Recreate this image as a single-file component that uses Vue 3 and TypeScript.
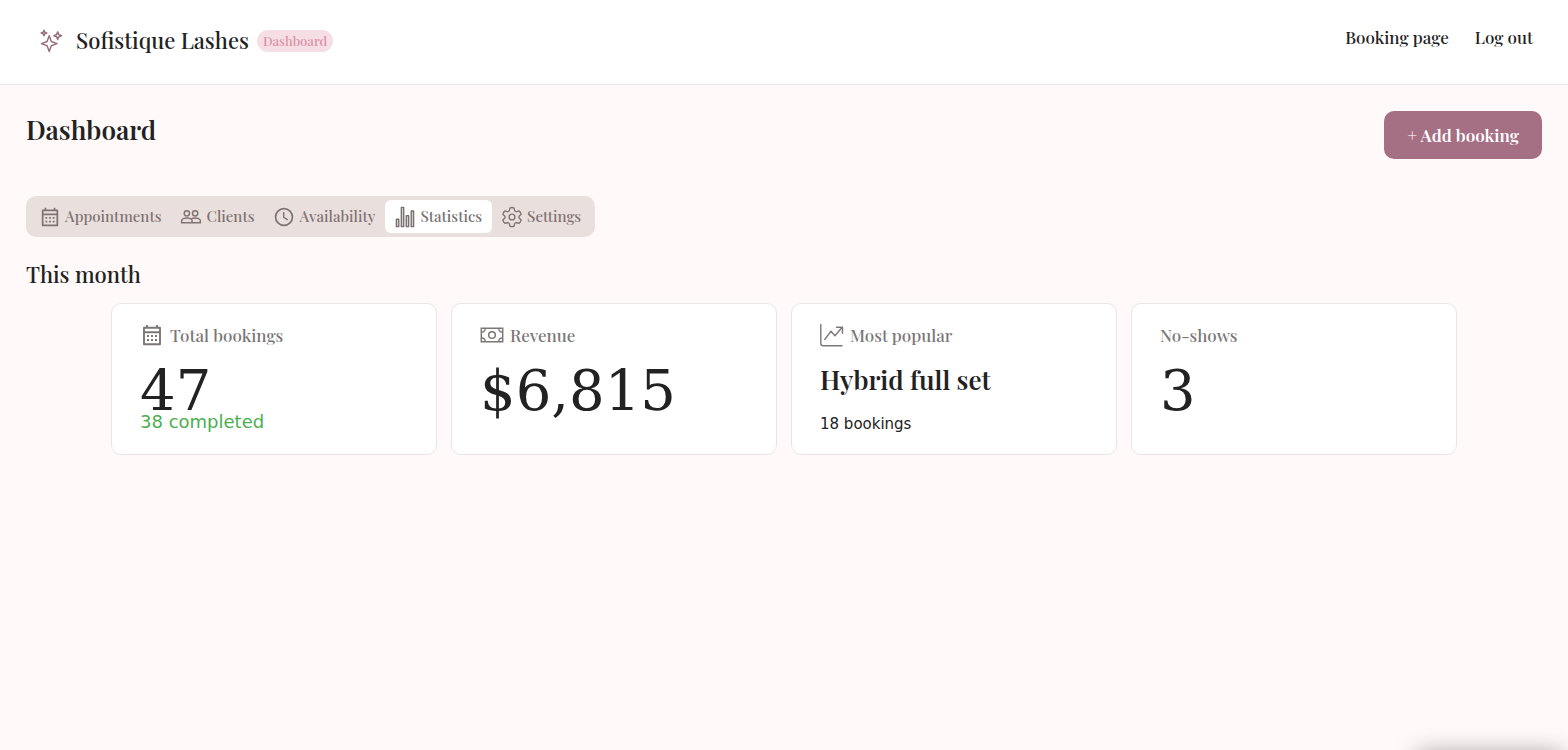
<script setup lang="ts">
import { ref } from 'vue'

type IconName = 'calendar' | 'clients' | 'clock' | 'bars' | 'gear' | 'money' | 'trend'

interface Tab {
  label: string
  icon: IconName
}

interface Stat {
  label: string
  icon?: IconName
  value?: string
  title?: string
  success?: string
  note?: string
}

const tabs: Tab[] = [
  { label: 'Appointments', icon: 'calendar' },
  { label: 'Clients', icon: 'clients' },
  { label: 'Availability', icon: 'clock' },
  { label: 'Statistics', icon: 'bars' },
  { label: 'Settings', icon: 'gear' },
]

const stats: Stat[] = [
  { label: 'Total bookings', icon: 'calendar', value: '47', success: '38 completed' },
  { label: 'Revenue', icon: 'money', value: '$6,815' },
  { label: 'Most popular', icon: 'trend', title: 'Hybrid full set', note: '18 bookings' },
  { label: 'No-shows', value: '3' },
]

const active = ref('Statistics')
</script>

<template>
  <svg class="defs" aria-hidden="true">
    <symbol id="calendar" viewBox="0 0 24 24">
      <path fill="none" stroke="currentColor" stroke-width="1.900" stroke-linejoin="round" d="M4 4.800h16v16.400H4zM4 9.200h16M7 2v2.800M17 2v2.800" />
      <path fill="currentColor" d="M7 12h2v2H7zm4 0h2v2h-2zm4 0h2v2h-2zM7 16h2v2H7zm4 0h2v2h-2zm4 0h2v2h-2z" />
    </symbol>
    <symbol id="clients" viewBox="0 0 24 24">
      <g fill="none" stroke="currentColor" stroke-width="1.600">
        <circle cx="7.500" cy="8" r="2.900" />
        <circle cx="16.500" cy="8" r="2.900" />
        <path d="M1.800 18.200v-2.100c0-1.900 3.300-3 5.700-3s5.700 1.100 5.700 3v2.100zM13.200 18.200h9v-2.100c0-1.900-3.300-3-5.700-3-1.500 0-3.200.4-4.400 1.100" />
      </g>
    </symbol>
    <symbol id="clock" viewBox="0 0 24 24">
      <g fill="none" stroke="currentColor" stroke-width="1.900">
        <circle cx="12" cy="12" r="9.200" />
        <path d="M11.700 6.500v5.900l4.500 2.700" stroke-width="1.500" />
      </g>
    </symbol>
    <symbol id="bars" viewBox="0 0 24 24">
      <path fill="#d8d4d4" stroke="currentColor" stroke-width="1.500" stroke-linejoin="round" d="M2.600 14.500h2.600v8H2.600zM8 1.500h2.600v21H8zM13.400 10.500H16v12h-2.600zM18.800 5.500h2.600v17h-2.600z" />
    </symbol>
    <symbol id="gear" viewBox="0 0 24 24">
      <g fill="none" stroke="currentColor" stroke-width="1.500" stroke-linejoin="round">
        <path d="M9.700 2.200Q12 1 14.300 2.200l.6 3 1.800 1.100 2.900-1Q21.700 6.900 21.900 9.300l-2.300 1.900v1.900l2.300 2Q21.700 17.400 19.600 19l-2.900-1-1.800 1.100-.6 2.900Q12 23 9.700 22l-.6-2.900L7.300 18l-2.900 1Q2.300 17.400 2.100 15.100l2.300-2v-1.900L2.100 9.300Q2.300 6.900 4.400 5.300l2.900 1 1.800-1.100z" />
        <circle cx="12" cy="12" r="3.200" />
      </g>
    </symbol>
    <symbol id="money" viewBox="0 0 24 24">
      <g fill="none" stroke="currentColor" stroke-width="1.500">
        <path d="M1.300 5.300h21.400v13.400H1.300zM5.300 5.300a4 4 0 0 1-4 4M18.700 5.300a4 4 0 0 0 4 4M5.300 18.700a4 4 0 0 0-4-4M18.700 18.700a4 4 0 0 1 4-4" />
        <circle cx="12" cy="12" r="3.300" />
      </g>
    </symbol>
    <symbol id="trend" viewBox="0 0 24 24">
      <g fill="none" stroke="currentColor" stroke-width="1.400" stroke-linecap="round" stroke-linejoin="round">
        <path d="M.8 1.500v18.700c0 1.800 1 2.600 2.800 2.600H22" />
        <path d="M4.800 16.500 11 8.200l4 4.500 7-8.200M16.500 4.200h6v6" />
      </g>
    </symbol>
  </svg>

  <div class="page">
    <header class="topbar">
      <div class="brand">
        <svg class="logo" viewBox="0 0 24 24" aria-hidden="true">
          <g fill="none" stroke="currentColor" stroke-width="1.500" stroke-linejoin="round">
            <path d="M10.200 6.800L12.300 12.500 18 14.600 12.300 16.700 10.200 22.400 8.100 16.700 2.400 14.600 8.100 12.500z" />
            <path d="M5 1.200L5.800 3.200 7.800 4 5.800 4.800 5 6.800 4.200 4.800 2.200 4 4.200 3.200z" />
            <path d="M18.700 2.900L19.800 5.600 22.500 6.700 19.800 7.800 18.700 10.500 17.600 7.800 14.900 6.700 17.600 5.600z" />
          </g>
        </svg>
        <span class="name">Sofistique Lashes</span>
        <span class="badge">Dashboard</span>
      </div>
      <nav class="links">
        <a href="#booking">Booking page</a>
        <a href="#logout">Log out</a>
      </nav>
    </header>

    <main>
      <div class="heading">
        <h1>Dashboard</h1>
        <button type="button" class="add"><span class="plus">+</span> Add booking</button>
      </div>

      <div class="tabs" role="tablist">
        <button
          v-for="tab in tabs"
          :key="tab.label"
          type="button"
          role="tab"
          class="tab"
          :class="{ active: active === tab.label }"
          :aria-selected="active === tab.label"
          @click="active = tab.label"
        >
          <svg class="tab-icon" aria-hidden="true"><use :href="'#' + tab.icon" /></svg>
          {{ tab.label }}
        </button>
      </div>

      <h2>This month</h2>
      <section class="cards">
        <article v-for="stat in stats" :key="stat.label" class="card">
          <h3>
            <svg v-if="stat.icon" class="card-icon" aria-hidden="true"><use :href="'#' + stat.icon" /></svg>
            {{ stat.label }}
          </h3>
          <p v-if="stat.value" class="value">{{ stat.value }}</p>
          <p v-if="stat.title" class="title">{{ stat.title }}</p>
          <p v-if="stat.success" class="success">{{ stat.success }}</p>
          <p v-if="stat.note" class="note">{{ stat.note }}</p>
        </article>
      </section>
    </main>
    <div class="tray"></div>
  </div>
</template>

<style>
body {
  margin: 0;
  background: #fff9f9;
}
</style>

<style scoped>
.defs {
  display: none;
}
.page {
  min-height: 100vh;
  background: #fff9f9;
  color: #222;
  font-family: "Playfair Display", "Liberation Serif", serif;
  font-weight: 500;
}
h1,
h2,
h3,
p {
  margin: 0;
}
button {
  border: 0;
  font-family: inherit;
  cursor: pointer;
}
.topbar {
  display: flex;
  justify-content: space-between;
  align-items: flex-start;
  padding: 26px 35px 28px 39px;
  background: #fff;
  border-bottom: 1px solid #e8e5e5;
}
.brand {
  display: flex;
  align-items: center;
  height: 30px;
}
.logo {
  width: 24px;
  height: 24px;
  margin-right: 13px;
  color: #98717d;
}
.name {
  padding-bottom: 2px;
  font-size: 22px;
  line-height: 28px;
}
.badge {
  margin-left: 8px;
  padding: 0 6px;
  border-radius: 11px;
  background: #f5dfe4;
  color: #dc8fa6;
  font-size: 13px;
  line-height: 22px;
}
.links {
  display: flex;
  gap: 26px;
}
.links a {
  color: #222;
  font-size: 17px;
  line-height: 22px;
  text-decoration: none;
}
main {
  padding: 26px;
}
.heading {
  display: flex;
  justify-content: space-between;
  align-items: flex-start;
}
h1 {
  font-size: 26px;
  font-weight: 600;
  line-height: 38px;
}
.add {
  padding: 0 23px;
  border-radius: 10px;
  background: #a56f84;
  color: #fff;
  font-size: 17px;
  font-weight: 600;
  line-height: 48px;
}
.plus {
  font-weight: 400;
}
.tabs {
  display: flex;
  width: fit-content;
  margin-top: 37px;
  padding: 4px;
  border-radius: 10px;
  background: #e9e0de;
}
.tab {
  display: flex;
  align-items: center;
  gap: 4px;
  padding: 0 10px 0 9px;
  border-radius: 6px;
  background: transparent;
  color: #817373;
  font-size: 15px;
  font-weight: 500;
  line-height: 33px;
}
.tab.active {
  background: #fff;
  color: #777071;
}
.tab-icon {
  width: 22px;
  height: 22px;
}
h2 {
  margin: 22px 0 14px;
  font-size: 22px;
  font-weight: 500;
  line-height: 30px;
}
.cards {
  display: grid;
  grid-template-columns: repeat(4, 1fr);
  gap: 14px;
  max-width: 1346px;
  margin: 0 auto;
}
.card {
  padding: 19px 28px 20px;
  border: 1px solid #e8e5e5;
  border-radius: 10px;
  background: #fff;
}
h3 {
  display: flex;
  align-items: center;
  gap: 6px;
  color: #7b7777;
  font-size: 17px;
  font-weight: 500;
  line-height: 24px;
}
.card-icon {
  width: 24px;
  height: 24px;
}
.value {
  margin-top: 24px;
  font-family: "DejaVu Serif", serif;
  font-size: 56px;
  font-weight: 400;
  line-height: 40px;
}
.title {
  margin-top: 17px;
  font-size: 26px;
  font-weight: 600;
  line-height: 32px;
}
.success {
  color: #4caf50;
  font-family: "DejaVu Sans", sans-serif;
  font-size: 18px;
  font-weight: 400;
  line-height: 22px;
}
.note {
  margin-top: 18px;
  font-family: "DejaVu Sans", sans-serif;
  font-size: 15px;
  font-weight: 400;
  line-height: 20px;
}
.tray {
  position: fixed;
  top: 100%;
  right: 6px;
  width: 144px;
  height: 40px;
  box-shadow: 0 4px 24px rgba(0, 0, 0, 0.4);
}
</style>
